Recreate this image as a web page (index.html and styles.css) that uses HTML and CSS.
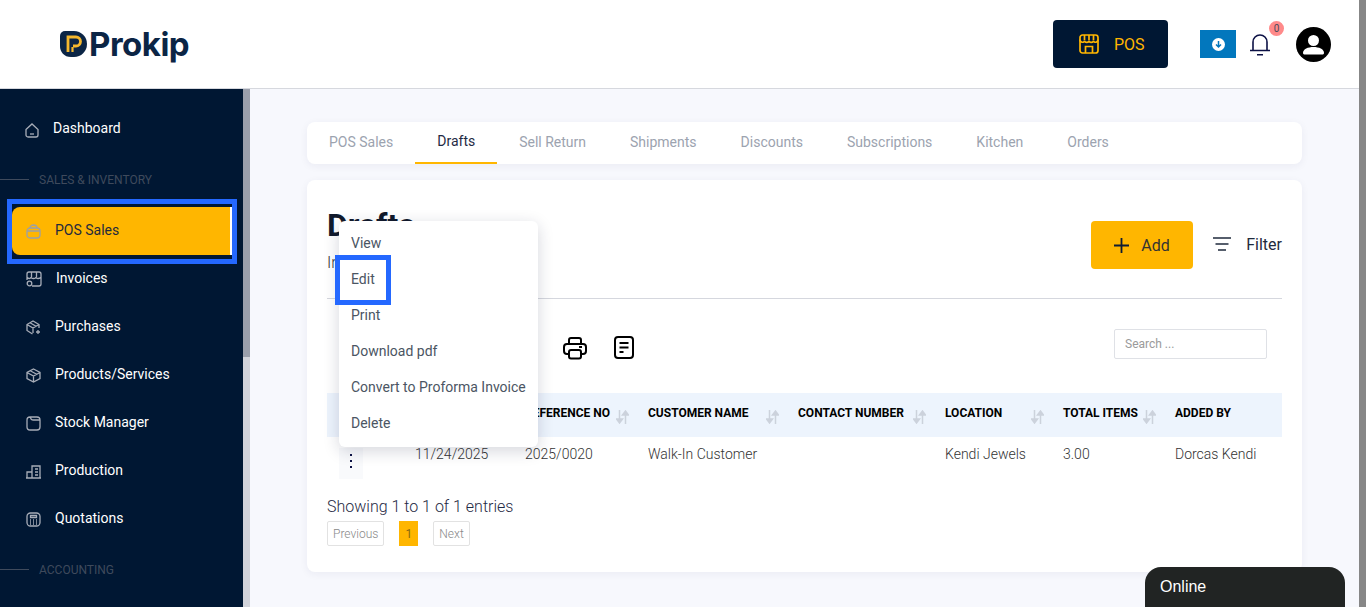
FILE: index.html
```html
<!DOCTYPE html>
<html lang="en">
<head>
    <meta charset="UTF-8">
    <meta name="viewport" content="width=device-width, initial-scale=1.0">
    <title>Drafts</title>
    <link rel="stylesheet" href="styles.css">
</head>
<body>
    <div class="page">
        <div class="page-inner">
            <!-- top bar -->
            <header class="topbar">
                <div class="logo">
                    <svg width="27" height="26" viewBox="0 0 27 26">
                        <path d="M5 0h9a13 13 0 0 1 0 26h-3C4 26 0 21 0 15V5a5 5 0 0 1 5-5z" fill="#0b2545"/>
                        <path d="M8 21V6h8a4.500 4.500 0 0 1 0 9h-3" fill="none" stroke="#f5b82e" stroke-width="2.800"/>
                        <path d="M12.500 21v-5" fill="none" stroke="#f5b82e" stroke-width="2.200"/>
                    </svg>
                    <span class="logo-text">Prokip</span>
                </div>
                <div class="topbar-right">
                    <button class="pos-btn">
                        <svg width="20" height="20" viewBox="0 0 20 20" fill="none" stroke="#ffb600" stroke-width="1.700">
                            <rect x="1" y="1" width="18" height="18" rx="2.500"/>
                            <path d="M1 5.500c0 3.500 4.500 3.500 4.500 1 0 2.500 4.500 2.500 4.500 0 0 2.500 4.500 2.500 4.500 0 0 2.500 4.500 2.500 4.500-1"/>
                            <path d="M5.500 1v5M10 1v5M14.500 1v5"/>
                            <path d="M6.500 19v-6.500h7V19"/>
                        </svg>
                        <span>POS</span>
                    </button>
                    <div class="install-btn">
                        <svg width="13" height="13" viewBox="0 0 13 13">
                            <circle cx="6.500" cy="6.500" r="6.500" fill="#fff"/>
                            <path d="M6.500 3v6M4 6.500l2.500 2.500L9 6.500" fill="none" stroke="#0277bd" stroke-width="1.500"/>
                        </svg>
                    </div>
                    <div class="bell">
                        <svg width="20" height="22" viewBox="0 0 20 22" fill="none" stroke="#0c1145" stroke-width="1.600">
                            <path d="M3 16V8a7 7 0 0 1 14 0v8"/>
                            <path d="M0 16.500h20M7 20.800h6"/>
                        </svg>
                        <span class="bell-count">0</span>
                    </div>
                    <svg class="avatar" width="35" height="35" viewBox="0 0 35 35">
                        <circle cx="17.500" cy="17.500" r="17.500" fill="#000"/>
                        <circle cx="17.500" cy="13.500" r="5.500" fill="#fff"/>
                        <path d="M7 26c0-4 5-6 10.500-6S28 22 28 26c0 1-1 1.500-2 1.500H9c-1 0-2-.5-2-1.500z" fill="#fff"/>
                    </svg>
                </div>
            </header>

            <div class="layout">
                <!-- side menu -->
                <aside class="sidebar">
                    <ul class="side-menu">
                        <li class="side-item first">
                            <svg class="side-icon" width="14" height="15" viewBox="0 0 14 15"><path d="M1 6.500 7 1l6 5.500V12a2 2 0 0 1-2 2H3a2 2 0 0 1-2-2z"/><path d="M5 11h4"/></svg>
                            <span>Dashboard</span>
                        </li>
                        <li class="side-title"><i></i><span>SALES &amp; INVENTORY</span></li>
                        <li class="side-item active">
                            <svg class="side-icon" width="15" height="15" viewBox="0 0 15 15"><rect x="1" y="4" width="13" height="10" rx="3"/><path d="M4 4c0-4 7-4 7 0M1 7h13"/></svg>
                            <span>POS Sales</span>
                        </li>
                        <li class="side-item">
                            <svg class="side-icon" width="16" height="16" viewBox="0 0 16 16"><path d="M3 1h10a2 2 0 0 1 2 2v10a2 2 0 0 1-2 2H6M1 9V3a2 2 0 0 1 2-2M1 6c1 2 4 2 4 0 0 2 5 2 5 0 0 2 4 2 5 0M5.500 1v5M10.500 1v5"/><circle cx="3.500" cy="12.500" r="2.300"/></svg>
                            <span>Invoices</span>
                        </li>
                        <li class="side-item">
                            <svg class="side-icon" width="15" height="15" viewBox="0 0 15 15"><path d="M13 8V4.500L7 1 1 4.500v6L6.500 14M1 4.500 7 8l6-3.500M7 8v5M4 2.800l6 3.500"/><path d="M12 10v4M10 12h4"/></svg>
                            <span>Purchases</span>
                        </li>
                        <li class="side-item">
                            <svg class="side-icon" width="15" height="15" viewBox="0 0 15 15"><path d="M7.500 1 14 4.500v6L7.500 14 1 10.500v-6zM1 4.500l6.500 3.500L14 4.500M7.500 8v6M4.200 2.800l6.500 3.500"/></svg>
                            <span>Products/Services</span>
                        </li>
                        <li class="side-item">
                            <svg class="side-icon" width="15" height="15" viewBox="0 0 15 15"><path d="M1 4a3 3 0 0 1 3-3h7a3 3 0 0 1 3 3v7a3 3 0 0 1-3 3H4a3 3 0 0 1-3-3zM4.500 1c0 2 1 3 3 3H14"/></svg>
                            <span>Stock Manager</span>
                        </li>
                        <li class="side-item">
                            <svg class="side-icon" width="15" height="15" viewBox="0 0 15 15"><path d="M0 14h15M1 14V8h5v6M6 14V2h8v12M9 5h3M9 8h3M9 11h3"/></svg>
                            <span>Production</span>
                        </li>
                        <li class="side-item">
                            <svg class="side-icon" width="15" height="15" viewBox="0 0 15 15"><rect x="1" y="1" width="13" height="13" rx="3.500"/><path d="M4.500 5.500h6V3.500h-6zM4 8h1M7 8h1M10 8h1M4 10h1M7 10h1M10 10h1M4 12h1M7 12h1M10 12h1"/></svg>
                            <span>Quotations</span>
                        </li>
                        <li class="side-title last"><i></i><span>ACCOUNTING</span></li>
                    </ul>
                </aside>
                <div class="side-scroll"><div class="side-thumb"></div></div>

                <main class="main">
                    <nav class="tabs">
                        <a class="tab">POS Sales</a>
                        <a class="tab active">Drafts</a>
                        <a class="tab">Sell Return</a>
                        <a class="tab">Shipments</a>
                        <a class="tab">Discounts</a>
                        <a class="tab">Subscriptions</a>
                        <a class="tab">Kitchen</a>
                        <a class="tab">Orders</a>
                    </nav>

                    <section class="card">
                        <div class="card-head">
                            <div>
                                <h1>Drafts</h1>
                                <p>Invoices</p>
                            </div>
                            <div class="card-actions">
                                <button class="add-btn">
                                    <svg width="15" height="15" viewBox="0 0 15 15" stroke="#0f1c33" stroke-width="1.800"><path d="M7.500 0v15M0 7.500h15"/></svg>
                                    <span>Add</span>
                                </button>
                                <div class="filter">
                                    <svg width="18" height="14" viewBox="0 0 18 14" stroke="#1f2a3d" stroke-width="1.700"><path d="M0 1h18M2.500 7h13M5 13h8"/></svg>
                                    <span>Filter</span>
                                </div>
                            </div>
                        </div>

                        <div class="tools">
                            <div class="tool-icons">
                                <svg width="24" height="24" viewBox="0 0 24 24" fill="none" stroke="#000" stroke-width="2">
                                    <path d="M6 8V4a2 2 0 0 1 2-2h8a2 2 0 0 1 2 2v4"/>
                                    <path d="M6 18H4a3 3 0 0 1-3-3v-4a3 3 0 0 1 3-3h16a3 3 0 0 1 3 3v4a3 3 0 0 1-3 3h-2"/>
                                    <rect x="6" y="14" width="12" height="8.500" rx="2"/>
                                    <path d="M16 11h3"/>
                                </svg>
                                <svg width="20" height="23" viewBox="0 0 20 23" fill="none" stroke="#000" stroke-width="2">
                                    <rect x="1" y="1" width="18" height="21" rx="3"/>
                                    <path d="M5.500 7h9M5.500 11.500h9M5.500 16h4"/>
                                </svg>
                            </div>
                            <input class="search" type="text" placeholder="Search ...">
                        </div>

                        <table class="data-table">
                            <colgroup>
                                <col class="c-action"><col class="c-date"><col class="c-ref"><col class="c-cust">
                                <col class="c-phone"><col class="c-loc"><col class="c-items"><col class="c-user">
                            </colgroup>
                            <thead>
                                <tr>
                                    <th></th>
                                    <th></th>
                                    <th><div class="th-in">Reference No<svg class="sort" width="13" height="14" viewBox="0 0 13 14"><path d="M3.500 0v11M0.500 9l3 4 3-4z"/><path d="M9.500 14V3M6.500 5l3-4 3 4z"/></svg></div></th>
                                    <th><div class="th-in">Customer Name<svg class="sort" width="13" height="14" viewBox="0 0 13 14"><path d="M3.500 0v11M0.500 9l3 4 3-4z"/><path d="M9.500 14V3M6.500 5l3-4 3 4z"/></svg></div></th>
                                    <th><div class="th-in">Contact Number<svg class="sort" width="13" height="14" viewBox="0 0 13 14"><path d="M3.500 0v11M0.500 9l3 4 3-4z"/><path d="M9.500 14V3M6.500 5l3-4 3 4z"/></svg></div></th>
                                    <th><div class="th-in">Location<svg class="sort" width="13" height="14" viewBox="0 0 13 14"><path d="M3.500 0v11M0.500 9l3 4 3-4z"/><path d="M9.500 14V3M6.500 5l3-4 3 4z"/></svg></div></th>
                                    <th><div class="th-in">Total Items<svg class="sort" width="13" height="14" viewBox="0 0 13 14"><path d="M3.500 0v11M0.500 9l3 4 3-4z"/><path d="M9.500 14V3M6.500 5l3-4 3 4z"/></svg></div></th>
                                    <th>Added By</th>
                                </tr>
                            </thead>
                            <tbody>
                                <tr>
                                    <td><span class="kebab"><i></i><i></i><i></i></span></td>
                                    <td>11/24/2025</td>
                                    <td>2025/0020</td>
                                    <td>Walk-In Customer</td>
                                    <td></td>
                                    <td>Kendi Jewels</td>
                                    <td>3.00</td>
                                    <td>Dorcas Kendi</td>
                                </tr>
                            </tbody>
                        </table>

                        <div class="entries">Showing 1 to 1 of 1 entries</div>
                        <div class="pager">
                            <a class="page-btn">Previous</a>
                            <a class="page-num">1</a>
                            <a class="page-btn">Next</a>
                        </div>

                        <!-- open row menu -->
                        <ul class="row-menu">
                            <li>View</li>
                            <li>Edit</li>
                            <li>Print</li>
                            <li>Download pdf</li>
                            <li>Convert to Proforma Invoice</li>
                            <li>Delete</li>
                        </ul>
                        <div class="mark mark-edit"></div>
                    </section>
                </main>
            </div>
        </div>
        <div class="page-scroll"></div>
    </div>

    <div class="mark mark-pos"></div>
    <div class="chat">Online</div>
</body>
</html>
```

FILE: styles.css
```css
* {
    box-sizing: border-box;
}

html,
body {
    margin: 0;
    height: 100%;
    overflow: hidden;
}

body {
    font-family: Roboto, "Liberation Sans", sans-serif;
    color: #1f2a3d;
    background: #fff;
}

.page {
    display: flex;
    height: 607px;
}

.page-inner {
    flex: 1;
    min-width: 0;
    display: flex;
    flex-direction: column;
}

.page-scroll {
    width: 7px;
    background: #878787;
}

/* top bar */
.topbar {
    height: 89px;
    flex: none;
    display: flex;
    align-items: center;
    justify-content: space-between;
    padding: 0 28px 0 60px;
    background: #fff;
    border-bottom: 1px solid #d6d8de;
}

.logo {
    display: flex;
    align-items: center;
    gap: 2px;
}

.logo-text {
    font-family: Inter, sans-serif;
    font-size: 33px;
    font-weight: 700;
    letter-spacing: -0.5px;
    color: #0b2545;
}

.topbar-right {
    display: flex;
    align-items: center;
}

.pos-btn {
    width: 115px;
    height: 48px;
    margin-right: 32px;
    padding: 0 0 0 26px;
    display: flex;
    align-items: center;
    gap: 15px;
    border: none;
    border-radius: 4px;
    background: #001733;
    color: #ffb600;
    font-family: inherit;
    font-size: 16px;
}

.install-btn {
    width: 36px;
    height: 28px;
    margin-right: 14px;
    display: flex;
    align-items: center;
    justify-content: center;
    background: #0277bd;
}

.bell {
    position: relative;
    width: 20px;
    height: 22px;
    margin-right: 26px;
    margin-top: 1px;
}

.bell svg {
    display: block;
}

.bell-count {
    position: absolute;
    left: 19px;
    top: -13px;
    width: 15px;
    height: 15px;
    border-radius: 50%;
    background: #ff8a8a;
    color: #4a4a5a;
    font-size: 10px;
    line-height: 15px;
    text-align: center;
}

.avatar {
    display: block;
}

/* side menu */
.layout {
    flex: 1;
    min-height: 0;
    display: flex;
}

.sidebar {
    width: 243px;
    flex: none;
    overflow: hidden;
    background: #001733;
}

.side-scroll {
    width: 7px;
    flex: none;
    background: #d1d3da;
}

.side-thumb {
    height: 268px;
    background: #9a9fab;
}

.side-menu {
    margin: 0;
    padding: 15px 0 0 0;
    list-style: none;
}

.side-item {
    height: 48px;
    margin-right: 11px;
    margin-left: 12px;
    padding-left: 14px;
    display: flex;
    align-items: center;
    gap: 14px;
    font-size: 14px;
    color: #fff;
}

.side-item span {
    margin-top: -2px;
}

.side-item.first span {
    margin-top: 0;
}

.side-item.first .side-icon {
    margin-left: -1px;
    margin-top: 4px;
}

.side-item.active {
    background: #ffb600;
    color: #1f2a3d;
    border-radius: 8px 0 0 8px;
    border-right: 2px solid #fff;
}

.side-item.active .side-icon {
    stroke: #9aa0a8;
}

.side-icon {
    flex: none;
    fill: none;
    stroke: #a7adb8;
    stroke-width: 1.3;
}

.side-title {
    height: 55px;
    display: flex;
    align-items: center;
    gap: 10px;
    font-size: 12px;
    color: #3f4a5c;
}

.side-title.last {
    margin-top: -1px;
}

.side-title i {
    width: 29px;
    height: 1px;
    background: #3f4a5c;
}

/* main area */
.main {
    flex: 1;
    min-width: 0;
    padding: 33px 57px 0 57px;
    background: #f7f8fd;
}

.tabs {
    height: 42px;
    display: flex;
    background: #fff;
    border-radius: 8px;
    box-shadow: 0 2px 8px rgba(30, 40, 80, 0.06);
}

.tab {
    padding: 0 22px 2px 22px;
    display: flex;
    align-items: center;
    font-size: 14px;
    color: #9ca3af;
}

.tab.active {
    padding-bottom: 3px;
    color: #1f2a44;
    border-bottom: 2px solid #ffb600;
}

.card {
    position: relative;
    height: 392px;
    margin-top: 16px;
    padding: 20px;
    background: #fff;
    border-radius: 8px;
    box-shadow: 0 2px 8px rgba(30, 40, 80, 0.06);
}

.card-head {
    height: 99px;
    display: flex;
    justify-content: space-between;
    border-bottom: 1px solid #d5d7de;
}

.card-head h1 {
    margin: 7px 0 0 0;
    font-size: 32px;
    line-height: 36px;
    font-weight: 700;
    color: #111a2c;
}

.card-head p {
    margin: 10px 0 0 0;
    font-size: 16px;
    font-weight: 300;
    color: #333;
}

.card-actions {
    display: flex;
    align-items: flex-start;
    gap: 20px;
    padding-top: 21px;
}

.add-btn {
    width: 102px;
    height: 48px;
    padding: 0 0 0 23px;
    display: flex;
    align-items: center;
    gap: 12px;
    border: none;
    border-radius: 4px;
    background: #ffb600;
    color: #333;
    font-family: inherit;
    font-size: 16px;
}

.filter {
    display: flex;
    align-items: center;
    gap: 15px;
    height: 48px;
    padding-bottom: 2px;
    font-size: 16px;
    color: #1f2a3d;
}

.tools {
    height: 94px;
    display: flex;
    justify-content: space-between;
    padding: 30px 15px 0 236px;
}

.tool-icons {
    display: flex;
    align-items: flex-start;
    gap: 27px;
    padding-top: 7px;
}

.tool-icons svg {
    display: block;
}

.search {
    width: 153px;
    height: 30px;
    padding: 0 10px;
    border: 1px solid #dfe1e6;
    border-radius: 2px;
    font-family: inherit;
    font-size: 12px;
}

.search::placeholder {
    color: #9a9a9a;
}

.data-table {
    width: 955px;
    table-layout: fixed;
    border-collapse: collapse;
}

.c-action { width: 78px; }
.c-date { width: 110px; }
.c-ref { width: 123px; }
.c-cust { width: 150px; }
.c-phone { width: 147px; }
.c-loc { width: 118px; }
.c-items { width: 112px; }
.c-user { width: 117px; }

.data-table th {
    height: 44px;
    padding: 0 10px 5px 10px;
    text-align: left;
    vertical-align: middle;
    background: #edf4fd;
    font-size: 12px;
    font-weight: 700;
    text-transform: uppercase;
    white-space: nowrap;
    color: #000;
}

.th-in {
    display: flex;
    justify-content: space-between;
}

.sort {
    flex: none;
    margin-top: 4px;
    margin-right: -1px;
    margin-bottom: -4px;
    fill: #ccd2dc;
    stroke: #ccd2dc;
    stroke-width: 1.5;
}

.data-table td {
    padding: 8px 10px 0 10px;
    vertical-align: top;
    font-size: 14px;
    line-height: 18px;
    font-weight: 300;
    color: #333;
}

.kebab {
    width: 24px;
    height: 31px;
    margin-top: 3px;
    margin-left: 2px;
    padding-bottom: 5px;
    display: flex;
    flex-direction: column;
    align-items: center;
    justify-content: center;
    gap: 4px;
    background: #f9fafc;
}

.kebab i {
    width: 2px;
    height: 2px;
    background: #0c1145;
}

.entries {
    margin-top: 18px;
    font-size: 16px;
    font-weight: 300;
    color: #1f2a44;
}

.pager {
    margin-top: 5px;
    display: flex;
    align-items: stretch;
    height: 25px;
    font-size: 12px;
    font-weight: 300;
}

.page-btn {
    padding: 0 5px;
    display: flex;
    align-items: center;
    border: 1px solid #e2e2e2;
    border-radius: 2px;
    color: #888;
}

.page-num {
    width: 19px;
    margin: 0 15px;
    display: flex;
    align-items: center;
    justify-content: center;
    background: #ffb600;
    color: #8a6a10;
    font-weight: 400;
}

.row-menu {
    position: absolute;
    left: 32px;
    top: 41px;
    width: 199px;
    margin: 0;
    padding: 4px 0 6px 0;
    list-style: none;
    background: #fff;
    border-radius: 6px;
    box-shadow: 0 4px 16px rgba(20, 30, 60, 0.18);
}

.row-menu li {
    height: 36px;
    padding-left: 12px;
    line-height: 36px;
    font-size: 14px;
    color: #4b5563;
    white-space: nowrap;
}

/* highlight boxes */
.mark {
    position: absolute;
    border: 5px solid #2468ff;
    pointer-events: none;
}

.mark-edit {
    left: 28px;
    top: 75px;
    width: 56px;
    height: 50px;
}

.mark-pos {
    left: 7px;
    top: 199px;
    width: 230px;
    height: 65px;
}

.chat {
    position: fixed;
    right: 21px;
    bottom: 0;
    width: 200px;
    height: 40px;
    padding: 11px 15px 0 15px;
    border-radius: 16px 16px 0 0;
    background: #212423;
    color: #fff;
    font-family: "Liberation Sans", sans-serif;
    font-size: 16px;
}
```
